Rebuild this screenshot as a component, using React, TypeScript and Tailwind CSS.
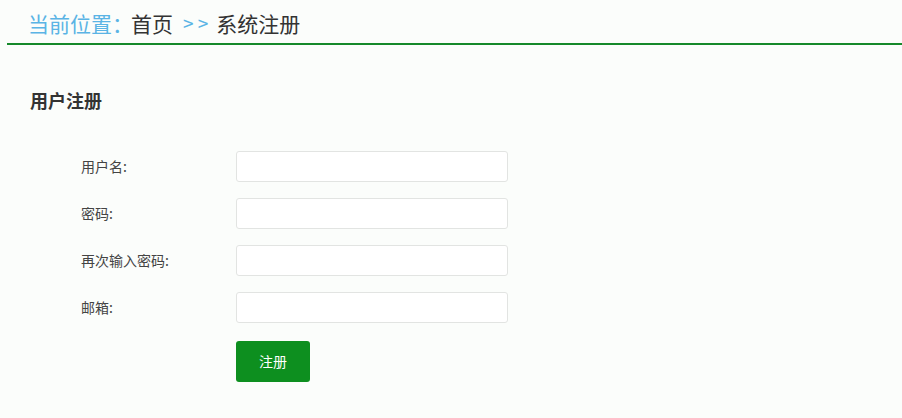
export default function App() {
  const fields = ["用户名:", "密码:", "再次输入密码:", "邮箱:"];
  return (
    <div
      className="w-[902px] h-[418px] bg-[#fbfdfb] text-[#333]"
      style={{ fontFamily: '"Microsoft YaHei", "Noto Sans CJK SC", sans-serif' }}
    >
      <div className="pl-[28px] pt-[8px] h-[43px] flex items-start text-[21px] leading-[30px]">
        <span className="text-[#5ab4e5]">当前位置：</span>
        <span className="text-[#333] ml-[-2px]">首页</span>
        <span className="text-[#5ab4e5] ml-[10px] text-[19px]">&gt; &gt;</span>
        <span className="text-[#333] ml-[8px]">系统注册</span>
      </div>
      <div className="ml-[7px] h-[2px] bg-[#15892a]" />
      <div className="pl-[30px] pt-[43px] text-[18px] font-bold leading-[24px] text-[#333]">
        用户注册
      </div>
      <div className="pt-[39px] flex flex-col gap-[16px]">
        {fields.map((f) => (
          <div key={f} className="flex items-center h-[31px]">
            <div className="w-[236px] pl-[81px] text-[14px] text-[#444]">{f}</div>
            <input
              type={f.includes("密码") ? "password" : "text"}
              className="w-[272px] h-[31px] bg-white border border-[#e2e4e2] rounded-[3px] outline-none"
            />
          </div>
        ))}
        <div className="pl-[236px] pt-[2px]">
          <button className="w-[74px] h-[41px] bg-[#0d8f1f] rounded-[3px] text-white text-[14px]">
            注册
          </button>
        </div>
      </div>
    </div>
  );
}
